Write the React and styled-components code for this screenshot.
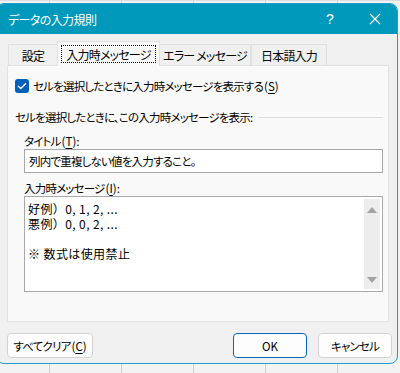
import React from "react";
import styled, { createGlobalStyle } from "styled-components";

const Global = createGlobalStyle`
  html, body { margin: 0; padding: 0; }
  body {
    width: 400px; height: 373px; overflow: hidden;
    font-family: "Noto Sans CJK JP", "Noto Sans", sans-serif;
    font-feature-settings: "palt";
    background: #f4f4f4;
  }
`;

const Sheet = styled.div`
  width: 400px;
  height: 373px;
  overflow: hidden;
  background:
    linear-gradient(#dcdcdc, #dcdcdc) 0 0 / 100% 1px no-repeat,
    repeating-linear-gradient(90deg, transparent 0 49px, #cfcfcf 49px 50px, transparent 50px 72px),
    #f3f3f3;
  padding-top: 3px;
  box-sizing: border-box;
`;

const Dialog = styled.div`
  margin-left: -4px;
  width: 402px;
  height: 361px;
  box-sizing: border-box;
  border: 1px solid #1b9fcb;
  border-radius: 8px;
  overflow: hidden;
  background: #f0f0f0;
  display: flex;
  flex-direction: column;
`;

const TitleBar = styled.div`
  height: 30px;
  background: #0099bc;
  display: flex;
  align-items: center;
  padding-left: 11px;
  color: #fff;
  font-size: 12px;
  letter-spacing: -0.6px;
  flex-shrink: 0;
  white-space: nowrap;
`;

const Title = styled.div`
  flex: 1;
`;

const TitleBtn = styled.div`
  width: 45px;
  display: flex;
  justify-content: center;
  align-items: center;
  font-size: 14px;
  font-family: "Liberation Sans", sans-serif;
`;

const Body = styled.div`
  padding: 8px 8px 0 10px;
  display: flex;
  flex-direction: column;
`;

const Tabs = styled.div`
  display: flex;
  align-items: flex-end;
  padding-left: 1px;
  height: 24px;
  position: relative;
  z-index: 1;
  margin-bottom: -1px;
`;

const Tab = styled.div`
  box-sizing: border-box;
  height: ${(p) => (p.$active ? 25 : 22)}px;
  width: ${(p) => p.$w}px;
  flex-shrink: 0;
  white-space: nowrap;
  border: 1px solid #e0e0e0;
  border-bottom: ${(p) => (p.$active ? "none" : "1px solid #e0e0e0")};
  margin-left: ${(p) => (p.$active ? -1 : 0)}px;
  margin-right: ${(p) => (p.$active ? -1 : 0)}px;
  background: ${(p) => (p.$active ? "#f9f9f9" : "#f0f0f0")};
  font-size: 12px;
  letter-spacing: -0.8px;
  color: #000;
  display: flex;
  align-items: center;
  justify-content: center;
  padding: ${(p) => (p.$active ? "3px 3px 3px" : "0")};
  z-index: ${(p) => (p.$active ? 2 : 1)};
`;

const Focus = styled.span`
  flex: 1;
  align-self: stretch;
  display: flex;
  align-items: center;
  justify-content: center;
  outline: 1px dotted #000;
  outline-offset: -1px;
`;

const Panel = styled.div`
  height: 257px;
  box-sizing: border-box;
  background: #f9f9f9;
  border: 1px solid #e3e3e3;
  padding: 12px 5px 0 7px;
  display: flex;
  flex-direction: column;
`;

const Text = styled.span`
  font-size: 11.5px;
  letter-spacing: -0.8px;
  color: #000;
  white-space: nowrap;
`;

const Latin = styled.span`
  letter-spacing: 0;
  margin-left: ${(p) => p.$ml || 0}px;
`;

const CheckRow = styled.label`
  display: flex;
  align-items: center;
  gap: 4px;
  height: 16px;
`;

const Check = styled.span`
  width: 14px;
  height: 14px;
  border-radius: 3px;
  background: #005fb8;
  display: flex;
  align-items: center;
  justify-content: center;
  flex-shrink: 0;
`;

const Group = styled.div`
  display: flex;
  align-items: center;
  gap: 6px;
  margin-top: 15px;
  height: 16px;
`;

const Rule = styled.div`
  flex: 1;
  height: 1px;
  background: #dcdcdc;
`;

const Field = styled.div`
  margin-left: 9px;
  display: flex;
  flex-direction: column;
`;

const Label = styled.div`
  height: 16px;
  line-height: 16px;
  margin-top: ${(p) => p.$mt}px;
  margin-bottom: ${(p) => p.$mb}px;
`;

const U = styled.span`
  text-decoration: underline;
  text-underline-offset: 2px;
`;

const Input = styled.div`
  height: 24px;
  box-sizing: border-box;
  background: #fff;
  border: 1px solid #a8a8a8;
  padding-left: 4px;
  display: flex;
  align-items: center;
`;

const TextArea = styled.div`
  height: 96px;
  box-sizing: border-box;
  background: #fff;
  border: 1px solid #a8a8a8;
  display: flex;
  padding: 2px 2px 2px 3px;
`;

const Lines = styled.div`
  flex: 1;
  font-size: 12px;
  line-height: 15px;
  color: #000;
  padding-top: 2px;
  white-space: pre;
  font-feature-settings: normal;
  letter-spacing: 0.4px;
`;

const Scroll = styled.div`
  width: 16px;
  background: #ededed;
  display: flex;
  flex-direction: column;
  justify-content: space-between;
  align-items: center;
  padding: 8px 0 6px;
`;

const Footer = styled.div`
  display: flex;
  align-items: center;
  padding: 11px 7px 0 10px;
`;

const Button = styled.div`
  height: 25px;
  width: ${(p) => p.$w}px;
  flex-shrink: 0;
  box-sizing: border-box;
  border: 1px solid ${(p) => (p.$primary ? "#0067c0" : "#d2d2d2")};
  border-radius: 4px;
  background: #fdfdfd;
  display: flex;
  align-items: center;
  justify-content: center;
  margin-left: ${(p) => p.$ml || 0}px;
`;

const Tri = ({ up }) => (
  <svg width="10" height="6" viewBox="0 0 10 6">
    <path d={up ? "M0 6 L5 0 L10 6 Z" : "M0 0 L5 6 L10 0 Z"} fill="#a3a3a3" />
  </svg>
);

export default function App() {
  return (
    <>
      <Global />
      <Sheet>
        <Dialog>
          <TitleBar>
            <Title>データの入力規則</Title>
            <TitleBtn>?</TitleBtn>
            <TitleBtn>
              <svg width="12" height="12" viewBox="0 0 12 12">
                <path d="M1 1 L11 11 M11 1 L1 11" stroke="#fff" strokeWidth="1.1" />
              </svg>
            </TitleBtn>
          </TitleBar>
          <Body>
            <Tabs>
              <Tab $w={50}>設定</Tab>
              <Tab $w={103} $active>
                <Focus>入力時メッセージ</Focus>
              </Tab>
              <Tab $w={92}>エラー メッセージ</Tab>
              <Tab $w={76}>日本語入力</Tab>
            </Tabs>
            <Panel>
              <CheckRow>
                <Check>
                  <svg width="10" height="8" viewBox="0 0 10 8">
                    <path d="M1 4 L3.8 6.6 L9 1.2" stroke="#fff" strokeWidth="1.4" fill="none" />
                  </svg>
                </Check>
                <Text>
                  セルを選択したときに入力時メッセージを表示する
                  <Latin $ml={1}>
                    (<U>S</U>)
                  </Latin>
                </Text>
              </CheckRow>
              <Group>
                <Text>
                  セルを選択したときに、この入力時メッセージを表示<Latin>:</Latin>
                </Text>
                <Rule />
              </Group>
              <Field>
                <Label $mt={6} $mb={2}>
                  <Text>
                    タイトル
                    <Latin $ml={1}>
                      (<U>T</U>):
                    </Latin>
                  </Text>
                </Label>
                <Input>
                  <Text>列内で重複しない値を入力すること。</Text>
                </Input>
                <Label $mt={5} $mb={2}>
                  <Text>
                    入力時メッセージ
                    <Latin $ml={1}>
                      (<U>I</U>):
                    </Latin>
                  </Text>
                </Label>
                <TextArea>
                  <Lines>{"好例）0, 1, 2, ...\n悪例）0, 0, 2, ...\n\n※ 数式は使用禁止"}</Lines>
                  <Scroll>
                    <Tri up />
                    <Tri />
                  </Scroll>
                </TextArea>
              </Field>
            </Panel>
          </Body>
          <Footer>
            <Button $w={86}>
              <Text>
                すべてクリア
                <Latin $ml={1}>
                  (<U>C</U>)
                </Latin>
              </Text>
            </Button>
            <Button $w={74} $primary $ml={140}>
              <Text>
                <Latin>OK</Latin>
              </Text>
            </Button>
            <Button $w={74} $ml={11}>
              <Text>キャンセル</Text>
            </Button>
          </Footer>
        </Dialog>
      </Sheet>
    </>
  );
}
